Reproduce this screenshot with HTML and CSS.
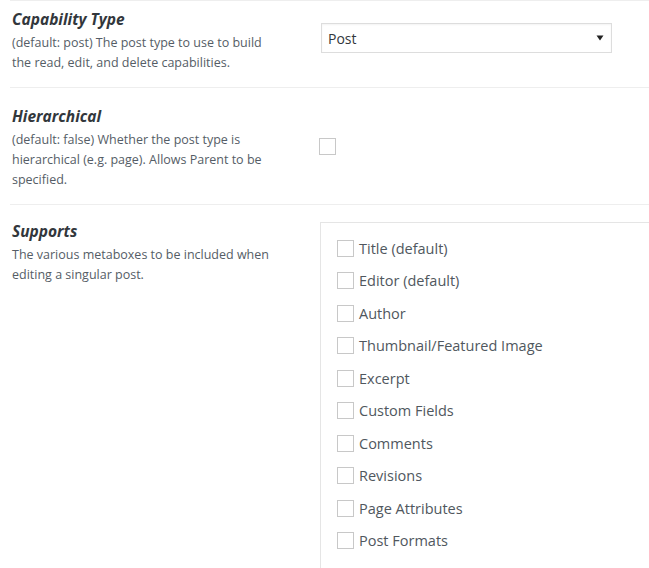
FILE: index.html
```html
<!DOCTYPE html>
<html>
<head>
<meta charset="utf-8">
<link rel="stylesheet" href="styles.css">
</head>
<body>
<div class="rows">
  <div class="row row-first">
    <div class="info">
      <div class="title">Capability Type</div>
      <div class="desc">(default: post) The post type to use to build<br>the read, edit, and delete capabilities.</div>
    </div>
    <div class="field">
      <div class="select">
        <span class="select-text">Post</span>
        <svg class="arrow" width="8" height="6" viewBox="0 0 8 6"><path d="M0.5 0.5 L7.5 0.5 L4 5.5 Z" fill="#222"/></svg>
      </div>
    </div>
  </div>
  <div class="row row-second">
    <div class="info">
      <div class="title">Hierarchical</div>
      <div class="desc">(default: false) Whether the post type is<br>hierarchical (e.g. page). Allows Parent to be<br>specified.</div>
    </div>
    <div class="field">
      <span class="box box-hier"></span>
    </div>
  </div>
  <div class="row row-third">
    <div class="info">
      <div class="title">Supports</div>
      <div class="desc">The various metaboxes to be included when<br>editing a singular post.</div>
    </div>
    <div class="field">
      <div class="panel">
        <label class="item"><span class="box"></span><span class="label">Title (default)</span></label>
        <label class="item"><span class="box"></span><span class="label">Editor (default)</span></label>
        <label class="item"><span class="box"></span><span class="label">Author</span></label>
        <label class="item"><span class="box"></span><span class="label">Thumbnail/Featured Image</span></label>
        <label class="item"><span class="box"></span><span class="label">Excerpt</span></label>
        <label class="item"><span class="box"></span><span class="label">Custom Fields</span></label>
        <label class="item"><span class="box"></span><span class="label">Comments</span></label>
        <label class="item"><span class="box"></span><span class="label">Revisions</span></label>
        <label class="item"><span class="box"></span><span class="label">Page Attributes</span></label>
        <label class="item"><span class="box"></span><span class="label">Post Formats</span></label>
      </div>
    </div>
  </div>
</div>
</body>
</html>
```
FILE: styles.css
```css
html, body {
  margin: 0;
  padding: 0;
  background: #fff;
  overflow: hidden;
}
body {
  font-family: "Open Sans", "Noto Sans", sans-serif;
  color: #555;
  height: 568px;
}
.rows {
  margin-left: 10px;
}
.row {
  display: grid;
  grid-template-columns: 308px 1fr;
  padding-left: 2px;
  border-bottom: 1px solid #eeeeee;
  padding-bottom: 14px;
}
.row-first {
  border-top: 1px solid #eeeeee;
  padding-top: 8px;
}
.row-second {
  padding-top: 18px;
}
.row-third {
  padding-top: 16px;
  border-bottom: none;
  padding-bottom: 0;
}
.title {
  font-size: 15.5px;
  line-height: 20px;
  font-weight: 700;
  font-style: italic;
  color: #32373c;
}
.desc {
  margin-top: 4px;
  font-size: 12.5px;
  line-height: 20px;
  color: #555d66;
}
.select {
  margin-top: 14px;
  margin-left: 1px;
  width: 276px;
  height: 28px;
  border: 1px solid #dddddd;
  box-shadow: inset 0 1px 2px rgba(0,0,0,0.05);
  display: flex;
  align-items: center;
  justify-content: space-between;
  padding: 0 7px 0 6px;
  box-sizing: content-box;
}
.select-text {
  font-size: 14px;
  line-height: 20px;
  margin-top: 2px;
  color: #32373c;
}
.arrow {
  display: block;
}
.box {
  display: block;
  width: 15px;
  height: 15px;
  border: 1px solid #c8c8c8;
  background: #fff;
  flex: none;
}
.box-hier {
  margin-top: 32px;
  margin-left: -1px;
}
.panel {
  margin-top: 1px;
  border-top: 1px solid #e5e5e5;
  border-left: 1px solid #e5e5e5;
  padding: 9px 0 0 16px;
  height: 400px;
}
.item {
  display: flex;
  align-items: center;
  height: 32.5px;
  gap: 5px;
}
.label {
  font-size: 14.5px;
  color: #50575e;
}
```
